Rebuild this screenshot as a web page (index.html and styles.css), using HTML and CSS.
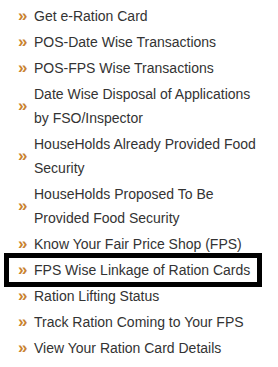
FILE: index.html
```html
<!DOCTYPE html>
<html lang="en">
<head>
    <meta charset="UTF-8">
    <meta name="viewport" content="width=device-width, initial-scale=1.0">
    <title>Ration Services</title>
    <link rel="stylesheet" href="styles.css">
</head>
<body>
    <ul class="menu">
        <li class="item"><span class="arrow">&raquo;</span><span class="label">Get e-Ration Card</span></li>
        <li class="item"><span class="arrow">&raquo;</span><span class="label">POS-Date Wise Transactions</span></li>
        <li class="item"><span class="arrow">&raquo;</span><span class="label">POS-FPS Wise Transactions</span></li>
        <li class="item"><span class="arrow">&raquo;</span><span class="label">Date Wise Disposal of Applications by FSO/Inspector</span></li>
        <li class="item"><span class="arrow">&raquo;</span><span class="label">HouseHolds Already Provided Food Security</span></li>
        <li class="item"><span class="arrow">&raquo;</span><span class="label">HouseHolds Proposed To Be Provided Food Security</span></li>
        <li class="item"><span class="arrow">&raquo;</span><span class="label">Know Your Fair Price Shop (FPS)</span></li>
        <li class="item selected"><span class="arrow">&raquo;</span><span class="label">FPS Wise Linkage of Ration Cards</span></li>
        <li class="item"><span class="arrow">&raquo;</span><span class="label">Ration Lifting Status</span></li>
        <li class="item"><span class="arrow">&raquo;</span><span class="label">Track Ration Coming to Your FPS</span></li>
        <li class="item"><span class="arrow">&raquo;</span><span class="label">View Your Ration Card Details</span></li>
    </ul>
</body>
</html>
```

FILE: styles.css
```css
body {
    margin: 0;
    background-color: #ffffff;
    font-family: "Liberation Sans", Arial, sans-serif;
}

.menu {
    list-style: none;
    margin: 0;
    padding: 3px 0 0 0;
    width: 262px;
}

.item {
    display: flex;
    align-items: center;
    padding: 1px 0;
    line-height: 24px;
    font-size: 14px;
    color: #333333;
}

.arrow {
    width: 16px;
    margin-left: 18px;
    flex: none;
    color: #c9822f;
    font-size: 17px;
    font-weight: bold;
}

.label {
    flex: 1;
}

.selected {
    margin: -4px 0 -4px 4px;
    padding: 0;
    border: 5px solid #000000;
}

.selected .arrow {
    margin-left: 9px;
}
```
